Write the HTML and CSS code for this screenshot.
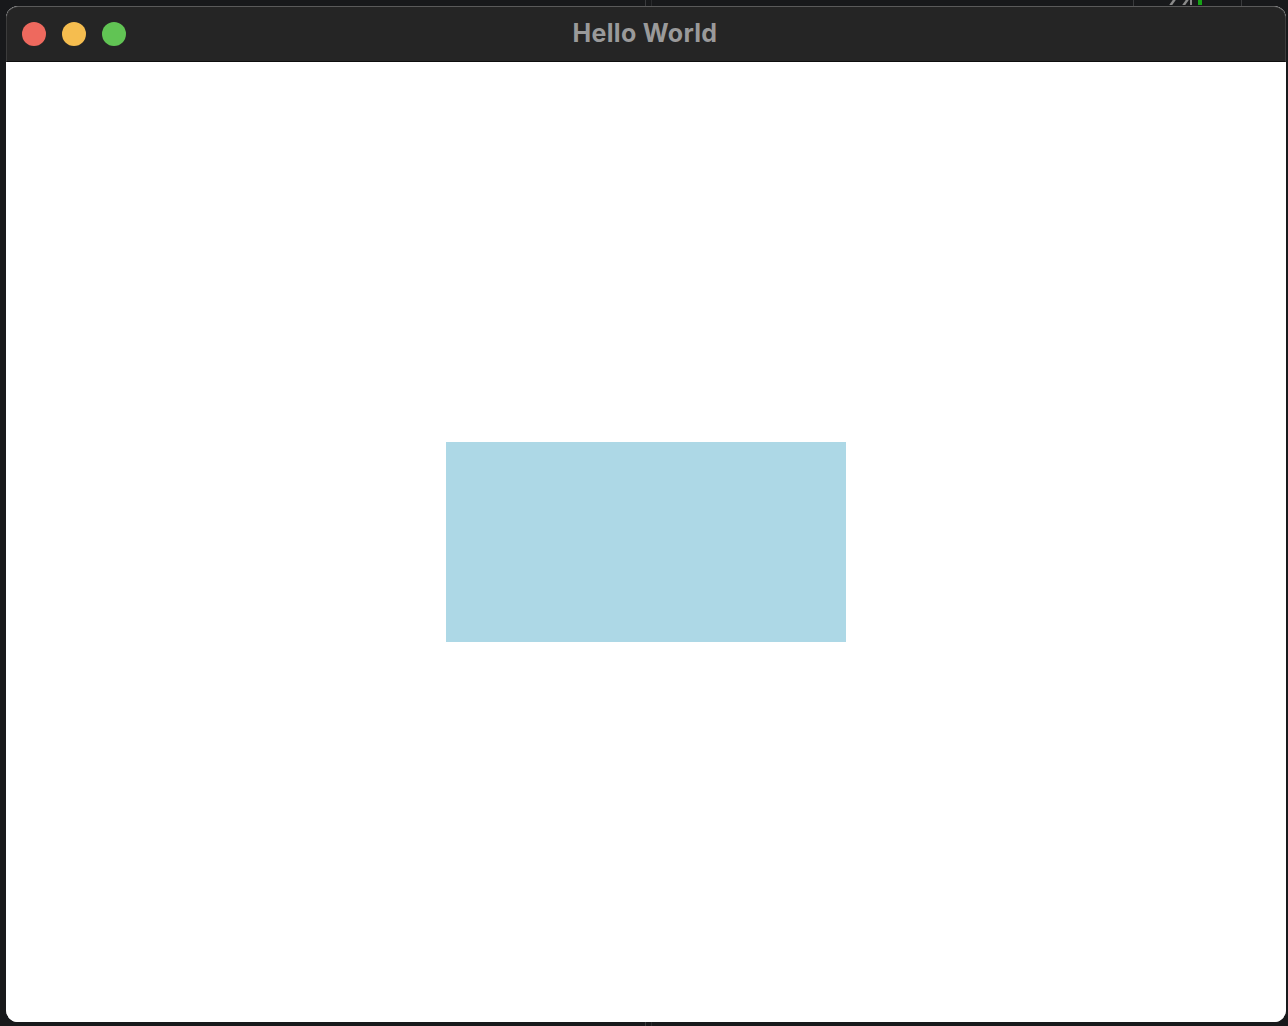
FILE: index.html
```html
<!DOCTYPE html>
<html>
<head>
<meta charset="utf-8">
<title>Hello World</title>
<link rel="stylesheet" href="styles.css">
</head>
<body>
<div class="desk">
  <span class="bg-line bg-line-a"></span>
  <span class="bg-line bg-line-b"></span>
  <span class="bg-line bg-line-c"></span>
  <span class="bg-line bg-line-d"></span>
  <span class="bg-slash bg-slash-a"></span>
  <span class="bg-slash bg-slash-b"></span>
  <span class="bg-slash bg-slash-c"></span>
  <span class="bg-green"></span>
  <span class="bg-line bg-line-e"></span>
  <span class="bg-line bg-line-f"></span>
</div>
<div class="window">
  <div class="titlebar">
    <div class="lights">
      <span class="light red"></span>
      <span class="light yellow"></span>
      <span class="light green"></span>
    </div>
    <div class="title">Hello World</div>
  </div>
  <div class="content">
    <div class="box"></div>
  </div>
</div>
</body>
</html>
```

FILE: styles.css
```css
html, body {
  margin: 0;
  padding: 0;
}
body {
  width: 1288px;
  height: 1026px;
  background: #18191b;
  position: relative;
  overflow: hidden;
  font-family: Inter, "Liberation Sans", Arial, sans-serif;
}
.desk {
  position: absolute;
  inset: 0;
}
.bg-line {
  position: absolute;
  width: 1px;
  background: #3a3b3d;
}
.bg-line-a { left: 645px; top: 0; height: 6px; }
.bg-line-b { left: 651px; top: 0; height: 6px; background: #2a2b2d; }
.bg-line-c { left: 1133px; top: 0; height: 6px; }
.bg-line-d { left: 1241px; top: 0; height: 6px; }
.bg-line-e { left: 645px; top: 1022px; height: 4px; }
.bg-line-f { left: 651px; top: 1022px; height: 4px; background: #2a2b2d; }
.bg-slash {
  position: absolute;
  top: 0;
  width: 3px;
  height: 5px;
  background: #8a8a8a;
  transform: skewX(-35deg);
}
.bg-slash-a { left: 1171px; }
.bg-slash-b { left: 1184px; }
.bg-slash-c { left: 1190px; width: 2px; transform: none; }
.bg-green {
  position: absolute;
  left: 1198px;
  top: 0;
  width: 4px;
  height: 5px;
  background: #16a316;
}
.window {
  position: absolute;
  left: 6px;
  top: 6px;
  width: 1280px;
  height: 1016px;
  border-radius: 12px;
  overflow: hidden;
  display: flex;
  flex-direction: column;
  background: #ffffff;
}
.titlebar {
  height: 56px;
  flex: none;
  box-sizing: border-box;
  background: #252525;
  border-top: 1px solid #5a5a5a;
  border-left: 1px solid #3c3c3c;
  border-right: 1px solid #3c3c3c;
  border-radius: 12px 12px 0 0;
  border-bottom: 1px solid #0e0e0e;
  position: relative;
  display: flex;
  align-items: center;
  justify-content: center;
}
.lights {
  position: absolute;
  left: 15px;
  top: 15px;
  display: flex;
  gap: 16px;
}
.light {
  width: 24px;
  height: 24px;
  border-radius: 50%;
  display: block;
}
.red { background: #ee695e; }
.yellow { background: #f5bd4f; }
.green { background: #61c454; }
.title {
  color: #9a9a9a;
  font-size: 25px;
  font-weight: 700;
  letter-spacing: 0.3px;
  margin-left: -2px;
  margin-top: -3px;
}
.content {
  flex: 1;
  display: flex;
  align-items: center;
  justify-content: center;
  background: #ffffff;
}
.box {
  width: 400px;
  height: 200px;
  background: #add8e6;
}
```
